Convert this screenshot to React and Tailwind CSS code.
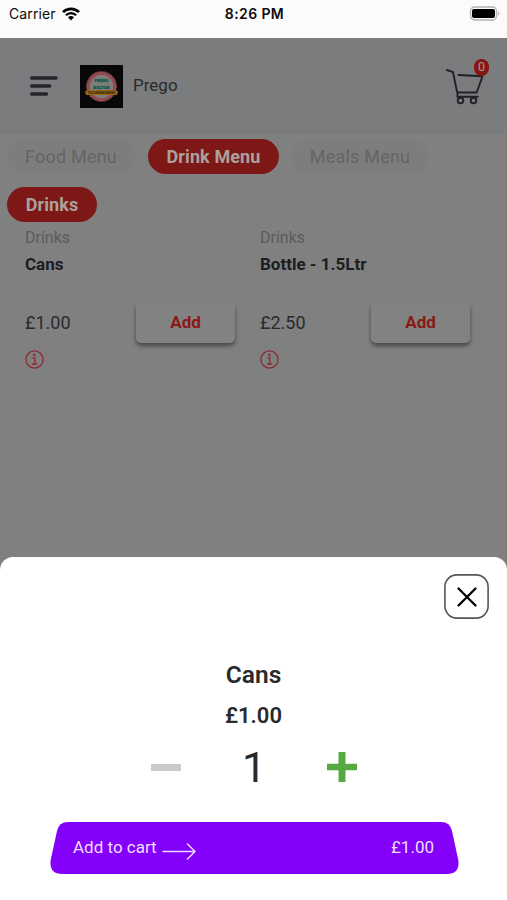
import React from "react";

function StatusBar() {
  return (
    <div className="grid h-[38px] shrink-0 grid-cols-3 bg-[#fbfbfb] pl-[9px] pr-[7px] font-['Inter','Liberation_Sans',sans-serif] text-[14px] text-[#0c0c0c]">
      <div className="flex h-[27px] items-center gap-[6px]">
        <span className="tracking-[0.1px]">Carrier</span>
        <svg className="h-[14px] w-[18px]" viewBox="0 0 18 14">
          <path d="M1 5.2C5.5.7 12.500.7 17 5.200" fill="none" stroke="#000" strokeWidth="2.6" />
          <path d="M3.900 8.200c2.900-2.900 7.300-2.900 10.200 0" fill="none" stroke="#000" strokeWidth="2.300" />
          <path d="M6 10.300c1.700-1.700 4.300-1.700 6 0L9 13.500z" fill="#000" />
        </svg>
      </div>
      <div className="flex h-[27px] items-center justify-center whitespace-nowrap font-semibold tracking-[0.4px]">8:26 PM</div>
      <div className="flex h-[26px] items-center justify-end">
        <svg className="h-[15px] w-[31px]" viewBox="0 0 31 15">
          <rect x="1.500" y="1" width="26" height="13" rx="4" fill="#fbfbfb" stroke="#b3b3b3" strokeWidth="1.300" />
          <rect x="3" y="3" width="23" height="9" rx="2" fill="#000" />
          <path d="M29 5.200c1.800.8 1.800 3.800 0 4.600z" fill="#b3b3b3" />
        </svg>
      </div>
    </div>
  );
}

function Logo() {
  return (
    <svg className="ml-[22px] h-[43px] w-[43px]" viewBox="0 0 43 43">
      <rect width="43" height="43" fill="#080808" />
      <circle cx="21.500" cy="21.500" r="14.600" fill="#7d7775" stroke="#8d4147" strokeWidth="1.800" strokeDasharray="1.500 .8" />
      <circle cx="21.500" cy="21.500" r="12.800" fill="#807d79" stroke="#914b50" strokeWidth="2.400" />
      <g fontFamily="Roboto, sans-serif" fontWeight="900" textAnchor="middle">
        <text x="21.500" y="17" fontSize="4.300" fill="#1c5f51" stroke="#1c5f51" strokeWidth=".35">PREGO</text>
        <text x="21.500" y="23.500" fontSize="4.300" fill="#1c5f51" stroke="#1c5f51" strokeWidth=".35">BOLTON</text>
        <path d="M5 26l5-1h23l5 1-1 4H6z" fill="#956817" />
        <text x="21.500" y="28.800" fontSize="2.600" fill="#38270c">PIZZA KEBAB BURGER</text>
      </g>
    </svg>
  );
}

function Header() {
  return (
    <header className="flex h-[96px] shrink-0 items-center bg-[#7a7c7e] pl-[30px] pr-[17px]">
      <svg className="h-[20px] w-[28px]" viewBox="0 0 28 20" stroke="#24252b" strokeWidth="3.300" strokeLinecap="round">
        <path d="M1.700 2H26M1.700 10H19.700M1.700 18H16.500" />
      </svg>
      <Logo />
      <span className="ml-[10px] text-[17px] text-[#2a2a2a]">Prego</span>
      <div className="relative ml-auto h-[50px] w-[45px]">
        <svg className="-mt-px h-[50px] w-[45px]" viewBox="0 0 45 50" fill="none" stroke="#202124" strokeWidth="1.900" strokeLinecap="round" strokeLinejoin="round">
          <path d="M2 10l6 2.200 4.200 20.300h19.500l5.800-16.300-24-1.200M12.500 33l-.2 3.800h20.500" />
          <circle cx="15.500" cy="40.500" r="2.800" />
          <circle cx="28.500" cy="40.500" r="2.800" />
        </svg>
        <span className="absolute -top-[2px] left-[29px] flex h-[17px] w-[15px] items-center justify-center rounded-full bg-[#831713] text-[12.5px] text-[#a39a99]">0</span>
      </div>
    </header>
  );
}

function Product({ name, price }) {
  return (
    <div className="flex w-[235px] shrink-0 flex-col">
      <span className="h-[26px] text-[16px] leading-[26px] text-[#5b5b5b]">Drinks</span>
      <span className="h-[27px] text-[17px] font-bold leading-[27px] text-[#1c1d1f]">{name}</span>
      <div className="mt-[25px] flex h-[40px] items-center justify-between pr-[25px]">
        <span className="-mt-px text-[18px] text-[#2a2a2a]">{price}</span>
        <span className="flex h-[40px] w-[99px] items-center justify-center rounded-[5px] bg-[#828282] text-[17px] font-bold text-[#8b1814] shadow-[0_3px_4px_rgba(0,0,0,0.45)]">Add</span>
      </div>
      <svg className="mt-[7px] h-[19px] w-[19px]" viewBox="0 0 19 19" fill="none" stroke="#8c2630" strokeWidth="1.300">
        <circle cx="9.500" cy="9.500" r="8.600" />
        <path d="M7.300 7.800h2.500v6M7 14h5.200" />
        <circle cx="9.300" cy="4.900" r=".6" fill="#8c2630" />
      </svg>
    </div>
  );
}

function Pill({ children, active = false, className }) {
  return (
    <span
      className={
        "flex h-[35px] shrink-0 items-center justify-center rounded-full pb-px text-[18px] " +
        (active ? "bg-[#7d1816] font-bold tracking-[0.1px] text-[#aaa19d] " : "bg-[#7d7d7d] tracking-[0.2px] text-[#646464] ") +
        className
      }
    >
      {children}
    </span>
  );
}

function Sheet() {
  return (
    <section className="flex h-[343px] shrink-0 flex-col items-center rounded-t-[13px] bg-white text-[#2a2a2c]">
      <div className="flex w-full justify-end pr-[18px] pt-[17px]">
        <svg className="h-[45px] w-[45px]" viewBox="0 0 45 45" fill="none">
          <rect x=".9" y=".9" width="43.200" height="43.200" rx="12" stroke="#565656" strokeWidth="1.600" />
          <path d="M14.500 14.500l17 17M31.500 14.500l-17 17" stroke="#000" strokeWidth="2.300" strokeLinecap="round" />
        </svg>
      </div>
      <h2 className="mt-[41px] h-[30px] text-[24.5px] font-semibold leading-[30px]">Cans</h2>
      <p className="mt-[12px] h-[28px] text-[22px] font-semibold leading-[28px]">£1.00</p>
      <div className="ml-px mt-[12px] flex h-[50px] w-[207px] items-center justify-between">
        <span className="h-[7px] w-[30px] bg-[#cacaca]" />
        <span className="text-[43px] leading-[50px]">1</span>
        <svg className="h-[30px] w-[30px]" viewBox="0 0 30 30">
          <path d="M11.500 0h7v11.700H30v6.500H18.500V30h-7V18.200H0v-6.500h11.500z" fill="#57aa42" />
        </svg>
      </div>
      <div className="relative ml-[2px] mt-[30px] h-[52px] w-[409px]">
        <svg className="absolute inset-0 h-[52px] w-[409px]" viewBox="0 0 409 52">
          <path d="M18 0H391Q400 0 402 9L408.300 38Q410 52 397 52H12Q-1 52 .7 38L7 9Q9 0 18 0Z" fill="#8300fa" />
        </svg>
        <div className="relative flex h-[52px] items-center pl-[23px] pr-[25px] text-[17px] text-[#f1deff]">
          <span>Add to cart</span>
          <svg className="ml-[5px] mt-[6px] h-[17px] w-[34px]" viewBox="0 0 34 17" fill="none" stroke="#efdcff" strokeWidth="1.500" strokeLinecap="round" strokeLinejoin="round">
            <path d="M1 8.500h32M25.500 1l7.500 7.500-7.500 7.500" />
          </svg>
          <span className="ml-auto">£1.00</span>
        </div>
      </div>
    </section>
  );
}

export default function App() {
  return (
    <div className="flex h-[900px] w-[507px] flex-col overflow-hidden bg-[#808080] font-['Roboto','Liberation_Sans',sans-serif]">
      <StatusBar />
      <Header />
      <main className="flex flex-1 flex-col">
        <div className="mt-[5px] flex gap-[13px] pl-[7px]">
          <Pill className="w-[128px]">Food Menu</Pill>
          <Pill active className="w-[131px]">Drink Menu</Pill>
          <Pill className="w-[136px]">Meals Menu</Pill>
        </div>
        <div className="mt-[13px] flex pl-[7px]">
          <Pill active className="w-[90px]">Drinks</Pill>
        </div>
        <div className="mt-[3px] flex pl-[25px]">
          <Product name="Cans" price="£1.00" />
          <Product name="Bottle - 1.5Ltr" price="£2.50" />
        </div>
      </main>
      <Sheet />
    </div>
  );
}
